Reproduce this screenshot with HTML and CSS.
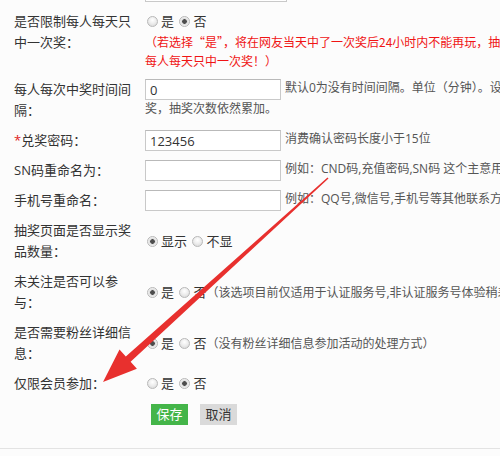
FILE: index.html
```html
<!DOCTYPE html>
<html lang="zh-CN">
<head>
<meta charset="utf-8">
<title>抽奖设置</title>
<link rel="stylesheet" href="styles.css">
</head>
<body>
<div class="page">
  <form class="form">
    <div class="row">
      <div class="label"></div>
      <div class="field"><input class="text-input prev-input" type="text"></div>
    </div>

    <div class="row">
      <div class="label">是否限制每人每天只中一次奖：</div>
      <div class="field">
        <div class="radios">
          <label class="opt"><input type="radio" name="daily">是</label>
          <label class="opt"><input type="radio" name="daily" checked>否</label>
        </div>
        <p class="warn">（若选择“是”，将在网友当天中了一次奖后24小时内不能再玩，抽奖次数用完也一样，即<br>每人每天只中一次奖！）</p>
      </div>
    </div>

    <div class="row">
      <div class="label">每人每次中奖时间间隔：</div>
      <div class="field hint-flow"><input class="text-input" type="text" value="0"><span class="hint">默认0为没有时间间隔。单位（分钟）。设置后在间隔时间内不能再中<br>奖，抽奖次数依然累加。</span></div>
    </div>

    <div class="row">
      <div class="label"><span class="req">*</span>兑奖密码：</div>
      <div class="field hint-flow"><input class="text-input" type="text" value="123456"><span class="hint">消费确认密码长度小于15位</span></div>
    </div>

    <div class="row">
      <div class="label">SN码重命名为：</div>
      <div class="field hint-flow"><input class="text-input" type="text"><span class="hint">例如：CND码,充值密码,SN码 这个主意用于兑换码的名称显示</span></div>
    </div>

    <div class="row">
      <div class="label">手机号重命名：</div>
      <div class="field hint-flow"><input class="text-input" type="text"><span class="hint">例如：QQ号,微信号,手机号等其他联系方式</span></div>
    </div>

    <div class="row row-center">
      <div class="label">抽奖页面是否显示奖品数量：</div>
      <div class="field radios">
        <label class="opt"><input type="radio" name="shownum" checked>显示</label>
        <label class="opt"><input type="radio" name="shownum">不显</label>
      </div>
    </div>

    <div class="row row-center">
      <div class="label">未关注是否可以参与：</div>
      <div class="field radios">
        <label class="opt"><input type="radio" name="follow" checked>是</label>
        <label class="opt"><input type="radio" name="follow">否</label><span class="note">（该选项目前仅适用于认证服务号,非认证服务号体验稍差）</span>
      </div>
    </div>

    <div class="row row-center">
      <div class="label">是否需要粉丝详细信息：</div>
      <div class="field radios">
        <label class="opt"><input type="radio" name="detail" checked>是</label>
        <label class="opt"><input type="radio" name="detail">否</label><span class="note">（没有粉丝详细信息参加活动的处理方式）</span>
      </div>
    </div>

    <div class="row">
      <div class="label">仅限会员参加：</div>
      <div class="field radios">
        <label class="opt"><input type="radio" name="member">是</label>
        <label class="opt"><input type="radio" name="member" checked>否</label>
      </div>
    </div>

    <div class="row actions">
      <div class="label"></div>
      <div class="field buttons">
        <button type="button" class="btn btn-save">保存</button>
        <button type="button" class="btn btn-cancel">取消</button>
      </div>
    </div>
  </form>

  <svg class="annotation" width="500" height="456" viewBox="0 0 500 456" aria-hidden="true">
    <polygon fill="#e8302e" points="328.5,178.6 327.5,177.4 125.8,356.6 119.5,349.6 103,382 136.9,368.8 130.6,361.8"/>
  </svg>
</div>
</body>
</html>
```

FILE: styles.css
```css
html, body {
  margin: 0;
  padding: 0;
  overflow: hidden;
  background: #fcfcfc;
}

.page {
  position: relative;
  width: 500px;
  height: 456px;
  overflow: hidden;
  font-family: "Open Sans", "Noto Sans CJK SC", sans-serif;
  color: #333;
}

.form {
  display: flex;
  flex-direction: column;
  gap: 9px;
  margin: -19px 0 0;
  padding: 0 0 23px 14px;
  border-bottom: 1px solid #e3e3e3;
  width: 1000px;
}

.row {
  display: flex;
  align-items: flex-start;
  gap: 9px;
}

.row-center {
  align-items: center;
}

.label {
  flex: 0 0 122px;
  width: 122px;
  min-height: 21px;
  font-size: 13px;
  line-height: 21px;
  color: #333;
}

.req {
  color: #e02020;
}

.field {
  flex: 1 1 auto;
  font-size: 13px;
  line-height: 21px;
  white-space: nowrap;
}

.text-input {
  box-sizing: border-box;
  width: 136px;
  height: 21px;
  margin: 0;
  padding: 0 4px;
  border: 1px solid #c9c9c9;
  border-top-color: #b9b9b9;
  background: #fff;
  font: 13px/19px "Open Sans", "Noto Sans CJK SC", sans-serif;
  color: #333;
  vertical-align: top;
  outline: none;
}

.prev-input {
  width: 142px;
}

.hint-flow {
  line-height: 17px;
}

.hint {
  margin-left: 4px;
  font-size: 12px;
  line-height: 17px;
  color: #555;
}

.radios {
  font-size: 13px;
  line-height: 21px;
}

.opt {
  color: #333;
}

.opt input {
  -webkit-appearance: none;
  appearance: none;
  box-sizing: border-box;
  width: 11px;
  height: 11px;
  margin: 0 3px 2px 2px;
  border: 1px solid #b8b8b8;
  border-radius: 50%;
  background: radial-gradient(circle at 50% 35%, #ffffff 0, #eeeeee 45%, #d4d4d4 100%);
  vertical-align: middle;
}

.opt input:checked {
  background: radial-gradient(circle at 50% 50%, #4d4d4d 0, #4d4d4d 2px, #dadada 2.6px, #f2f2f2 70%, #d2d2d2 100%);
}

.warn {
  margin: 0;
  font-family: "Noto Sans CJK SC", sans-serif;
  font-size: 12px;
  line-height: 19px;
  color: #f01414;
}

.note {
  font-size: 12px;
  color: #555;
}

.actions {
  margin-top: 1px;
}

.buttons {
  display: flex;
  gap: 12px;
  padding-left: 6px;
}

.btn {
  width: 37px;
  height: 21px;
  padding: 0;
  border: 0;
  border-radius: 0;
  font: 13px/21px "Open Sans", "Noto Sans CJK SC", sans-serif;
  cursor: pointer;
}

.btn-save {
  background: #44b549;
  color: #fff;
}

.btn-cancel {
  background: #dadada;
  color: #333;
}

.annotation {
  position: absolute;
  top: 0;
  left: 0;
  pointer-events: none;
}
```
